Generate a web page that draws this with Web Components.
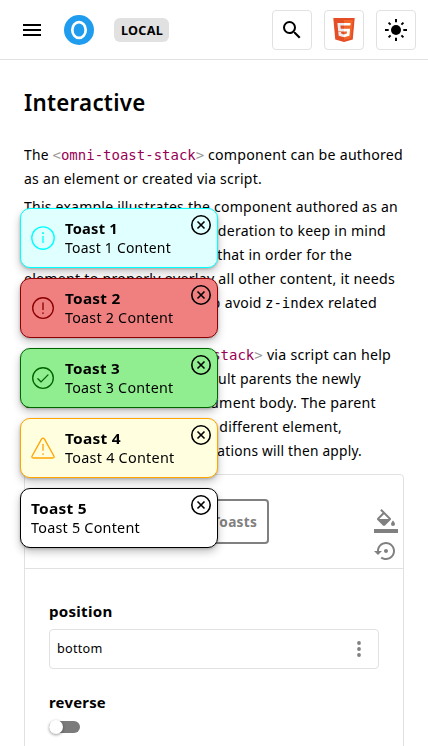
<!DOCTYPE html>
<html lang="en">
<head>
<meta charset="utf-8">
<title>Toast stack</title>
<style>
html,body{margin:0;height:746px;overflow:hidden;background:#fff;color:#000}
body{font:15px/24px "Noto Sans","Open Sans",sans-serif}
</style>
</head>
<body>
<docs-page></docs-page>
<script>
const define = (name, markup, setup) => {
  const tpl = document.createElement('template');
  tpl.innerHTML = markup;
  customElements.define(name, class extends HTMLElement {
    connectedCallback() {
      if (this.shadowRoot) return;
      this.attachShadow({mode: 'open'}).append(tpl.content.cloneNode(true));
      if (setup) setup(this, this.shadowRoot);
    }
  });
};

/* A run of text condensed to an exact width. */
define('fit-text', `<style>:host{display:inline-block;white-space:pre}span{display:inline-block;letter-spacing:.25px;transform-origin:0 50%}</style><span><slot></slot></span>`, (el, root) => {
  const span = root.querySelector('span');
  const w = +el.getAttribute('w');
  const natural = span.getBoundingClientRect().width;
  el.style.width = w + 'px';
  span.style.transform = 'scaleX(' + (w / natural) + ')';
});

define('text-line', `<style>:host{display:flex;height:24px;align-items:baseline;white-space:pre}</style><slot></slot>`);

define('code-tag', `<style>:host{font:14px/24px "DejaVu Sans Mono",monospace;color:#990055}i{font-style:normal;color:#999}</style><i>&lt;</i><slot></slot><i>&gt;</i>`);

define('tool-button', `<style>:host{box-sizing:border-box;width:40px;height:40px;border:1px solid #e1e1e1;border-radius:4px;display:flex;align-items:center;justify-content:center}</style><slot></slot>`);

define('site-header', `<style>
:host{display:flex;align-items:center;height:59px;border-bottom:1px solid #e1e1e1;padding:0 12px 0 20px}
.logo{margin-left:20px}
.badge{margin-left:20px;width:55px;height:24px;border-radius:6px;background:#e1e1e1;display:flex;align-items:center;justify-content:center;font-weight:700;font-size:12.5px;line-height:22px}
.badge fit-text{padding-top:2px}
.tools{margin-left:auto;display:flex;gap:12px}
svg{display:block}
</style>
<svg width="24" height="24" viewBox="0 0 24 24"><path d="M3 18h18v-2H3v2zm0-5h18v-2H3v2zm0-7v2h18V6H3z"/></svg>
<svg class="logo" width="30" height="30" viewBox="0 0 30 30"><circle cx="15" cy="15" r="15" fill="#209cee"/><ellipse cx="15" cy="15" rx="6.7" ry="7.9" fill="none" stroke="#fff" stroke-width="2.7"/></svg>
<div class="badge"><fit-text w="42">LOCAL</fit-text></div>
<div class="tools">
<tool-button><svg width="24" height="24" viewBox="0 0 24 24"><path d="M15.5 14h-.79l-.28-.27A6.47 6.47 0 0 0 16 9.5 6.5 6.5 0 1 0 9.5 16c1.61 0 3.09-.59 4.23-1.57l.27.28v.79l5 4.99L20.49 19l-4.99-5zm-6 0C7.01 14 5 11.99 5 9.5S7.01 5 9.5 5 14 7.01 14 9.5 11.99 14 9.5 14z"/></svg></tool-button>
<tool-button><svg width="24" height="24" viewBox="0 0 24 24"><path fill="#e44d26" d="M1.3 0h21.4l-1.95 21.6L12 24l-8.75-2.4z"/><path fill="#f16529" d="M12 1.9h8.7L19 20.1l-7 2z"/><path fill="#ebebeb" d="M12 4.9H5.4l.8 8.6H12v-2.8H8.7l-.25-3.1H12zM12 16.4l-2.8-.8-.2-1.5H6.3l.4 3.7 5.3 1.5z"/><path fill="#fff" d="M12 4.9h6.6l-.25 2.7H12zM12 10.7h6.1l-.7 7.1-5.4 1.5v-2.9l2.8-.8.25-2.1H12z"/></svg></tool-button>
<tool-button><svg width="24" height="24" viewBox="0 0 24 24"><circle cx="12" cy="12" r="5"/><path stroke="#000" stroke-width="2" d="M12 1v3.2M12 19.8V23M1 12h3.7M19.3 12H23M4.6 4.6l2 2M17.4 17.4l2 2M4.6 19.4l2-2M17.4 6.6l2-2"/></svg></tool-button>
</div>`);

define('doc-section', `<style>
:host{display:block;padding:0 24px}
h2{margin:27px 0 0;height:32px;font-size:22.5px;line-height:32px;font-weight:600}
.p{padding-bottom:4px}
.first{margin-top:23px}
code{font:14px/24px "DejaVu Sans Mono",monospace}
</style>
<h2><fit-text w="121.500">Interactive</fit-text></h2>
<div class="p first">
<text-line><fit-text w="28.5">The </fit-text><code-tag>omni-toast-stack</code-tag><fit-text w="199">&nbsp;component can be authored</fit-text></text-line>
<text-line><fit-text w="238">as an element or created via script.</fit-text></text-line>
</div>
<div class="p">
<text-line><fit-text w="374">This example illustrates the component authored as an</fit-text></text-line>
<text-line><fit-text w="362">element. An important consideration to keep in mind</fit-text></text-line>
<text-line><fit-text w="328">when using this approach is that in order for the</fit-text></text-line>
<text-line><fit-text w="371">element to properly overlay all other content, it needs</fit-text></text-line>
<text-line><fit-text w="196.500">to be placed last in the body to</fit-text><fit-text w="44.500">&nbsp;avoid </fit-text><code>z-index</code><fit-text w="53">&nbsp;related</fit-text></text-line>
<text-line><fit-text w="46">issues.</fit-text></text-line>
</div>
<div class="p">
<text-line><fit-text w="87">Creating the </fit-text><code-tag>omni-toast-stack</code-tag><fit-text w="128">&nbsp;via script can help</fit-text></text-line>
<text-line><fit-text w="337">with this, since it will by default parents the newly</fit-text></text-line>
<text-line><fit-text w="352">created element to the document body. The parent</fit-text></text-line>
<text-line><fit-text w="318">can also be specified to be a different element,</fit-text></text-line>
<text-line><fit-text w="338">but the same layout considerations will then apply.</fit-text></text-line>
</div>`);

define('text-input', `<style>:host{display:flex;align-items:center;justify-content:space-between;box-sizing:border-box;height:40px;border:1px solid #e1e1e1;border-radius:4px;padding:0 17px 0 7px;font-size:13.300px}svg{display:block}::slotted(*){padding-bottom:2px}</style>
<slot></slot><svg width="4" height="16" viewBox="0 0 4 16" fill="#808080"><circle cx="2" cy="2" r="1.9"/><circle cx="2" cy="8" r="1.9"/><circle cx="2" cy="14" r="1.9"/></svg>`);

define('toggle-switch', `<style>:host{display:flex;align-items:center;box-sizing:border-box;width:31px;height:12px;border-radius:6px;background:#7b7b7b}b{flex:none;width:14px;height:14px;border-radius:50%;background:#fff;box-shadow:0 1px 3px #0006}</style><b></b>`);

define('live-editor', `<style>
:host{display:block;margin:7.5px 24px 0;border:1px solid #e1e1e1;border-radius:4px;height:320px;box-sizing:border-box}
.preview{display:flex;border-bottom:1px solid #e1e1e1;padding:0 5px 0 24px;box-sizing:border-box;height:94px}
.btn{box-sizing:border-box;margin-top:24px;width:220px;height:45px;border:2px solid #808080;border-radius:4px;color:#808080;font-weight:700;font-size:14px;display:flex;align-items:center;justify-content:flex-end;padding:2px 10px 0 0}
.icons{margin-left:auto;display:flex;flex-direction:column;gap:6px;padding-top:34px}
svg{display:block;fill:#808080}
.props{padding:30px 24px 0}
.label{font-weight:700;font-size:15px;height:24px}
text-input{margin-top:6px}
.second{margin-top:21px}
toggle-switch{margin-top:7px}
</style>
<div class="preview"><div class="btn"><fit-text w="86">Show Toasts</fit-text></div>
<div class="icons"><svg width="24" height="24" viewBox="0 0 24 24"><path d="M16.56 8.94L7.62 0 6.21 1.41l2.38 2.38-5.15 5.15c-.59.59-.59 1.54 0 2.12l5.5 5.5c.29.29.68.44 1.06.44s.77-.15 1.06-.44l5.5-5.5c.59-.58.59-1.53 0-2.12zM5.21 10L10 5.21 14.79 10H5.21zM19 11.5s-2 2.17-2 3.5c0 1.1.9 2 2 2s2-.9 2-2c0-1.33-2-3.5-2-3.5zM0 20h24v4H0z"/></svg>
<svg width="24" height="24" viewBox="0 0 24 24"><path d="M14 12c0-1.100-.900-2-2-2s-2 .900-2 2 .900 2 2 2 2-.900 2-2zm-2-9c-4.970 0-9 4.030-9 9H0l4 4 4-4H5c0-3.870 3.130-7 7-7s7 3.130 7 7-3.130 7-7 7c-1.510 0-2.910-.490-4.060-1.300l-1.420 1.440C8.040 20.300 9.940 21 12 21c4.970 0 9-4.030 9-9s-4.030-9-9-9z"/></svg></div></div>
<div class="props"><div class="label"><fit-text w="63.5">position</fit-text></div><text-input><fit-text w="45.5">bottom</fit-text></text-input>
<div class="label second"><fit-text w="57">reverse</fit-text></div><toggle-switch></toggle-switch></div>`);

const icons = {
  info: '<circle cx="12" cy="12" r="11.2"/><path d="M12 10.500v6"/><path stroke-width="1.900" d="M12 7v.300"/>',
  error: '<circle cx="12" cy="12" r="10.300"/><path d="M12 7v6.500"/><path stroke-width="1.600" d="M12 17v.200"/>',
  success: '<circle cx="12" cy="12" r="10.300"/><path d="M6.900 12.700l3.200 3.200 6.900-7"/>',
  warning: '<path d="M10.500 3.100L1.100 20q-.8 2 1.300 2h19.200q2.100 0 1.300-2L13.500 3.100q-1.500-2-3 0z"/><path d="M12 8.300v6"/><path stroke-width="1.600" d="M12 18v.200"/>'
};
define('toast-card', `<style>
:host{display:flex;box-sizing:border-box;width:198px;height:60px;border:1px solid var(--line);border-radius:10px;background:var(--fill);padding:10px;line-height:19px;position:relative;box-shadow:0 4px 8px rgba(0,0,0,.24),0 1px 3px rgba(0,0,0,.2)}
.icon{width:24px;height:24px;margin:7px 10px 0 0;fill:none;stroke:var(--line);stroke-width:1.35;stroke-linecap:round;stroke-linejoin:round}
.title{font-weight:700}
.close{position:absolute;right:6px;top:6px}
</style><svg class="icon" viewBox="0 0 24 24"></svg><div><div class="title"><slot name="title"></slot></div><slot></slot></div>
<svg class="close" width="20" height="20" viewBox="0 0 20 20" fill="none" stroke="#000" stroke-width="1.6"><circle cx="10" cy="10" r="9.200"/><path d="M6.500 6.500l7 7m0-7l-7 7"/></svg>`, (el, root) => {
  const icon = root.querySelector('.icon'), kind = el.getAttribute('kind');
  if (kind) icon.innerHTML = icons[kind]; else icon.remove();
});

define('toast-stack', `<style>:host{position:fixed;left:20px;top:208px;display:flex;flex-direction:column;gap:10px}</style><slot></slot>`);

define('docs-page', `<style>:host{display:block;height:746px;overflow:hidden}</style>
<site-header></site-header><doc-section></doc-section><live-editor></live-editor>
<toast-stack>
<toast-card kind="info" style="--line:#0ff;--fill:#e0ffff"><fit-text slot="title" w="53">Toast 1</fit-text><fit-text w="106">Toast 1 Content</fit-text></toast-card>
<toast-card kind="error" style="--line:#8b0000;--fill:#f08080"><fit-text slot="title" w="55.500">Toast 2</fit-text><fit-text w="108.500">Toast 2 Content</fit-text></toast-card>
<toast-card kind="success" style="--line:#006400;--fill:#90ee90"><fit-text slot="title" w="55">Toast 3</fit-text><fit-text w="108.500">Toast 3 Content</fit-text></toast-card>
<toast-card kind="warning" style="--line:#ffa500;--fill:#ffffe0"><fit-text slot="title" w="56">Toast 4</fit-text><fit-text w="109.500">Toast 4 Content</fit-text></toast-card>
<toast-card style="--line:#000;--fill:#fff"><fit-text slot="title" w="56">Toast 5</fit-text><fit-text w="109">Toast 5 Content</fit-text></toast-card>
</toast-stack>`);
</script>
</body>
</html>
